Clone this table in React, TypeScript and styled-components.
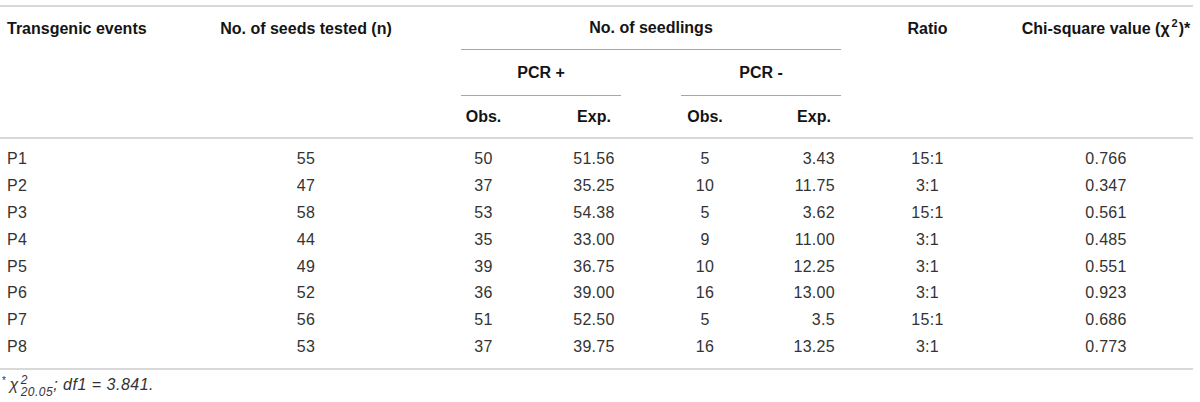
import React from "react";
import styled, { createGlobalStyle } from "styled-components";

const COLS = "212px 188px 141px 80px 140px 80px 173px 179px";

const GlobalStyle = createGlobalStyle`
  html, body { margin: 0; padding: 0; background: #ffffff; }
  body { font-family: "Liberation Sans", Arial, Helvetica, sans-serif; }
`;

const Wrapper = styled.div`
  width: 1193px;
  padding-top: 5px;
`;

const Table = styled.div`
  border-top: 2px solid #d9d9d9;
  border-bottom: 2px solid #d9d9d9;
`;

const Head = styled.div`
  display: grid;
  grid-template-columns: ${COLS};
  grid-template-rows: 43px 46px 41px;
  border-bottom: 2px solid #d9d9d9;
  font-weight: bold;
  font-size: 16px;
  color: #141414;
`;

type CellProps = {
  $col: string;
  $row?: string;
  $align?: "left" | "center" | "right";
  $pl?: number;
  $pr?: number;
};

const HeadCell = styled.div<CellProps>`
  grid-column: ${(p) => p.$col};
  grid-row: ${(p) => p.$row ?? "1"};
  display: flex;
  align-items: center;
  justify-content: ${(p) =>
    p.$align === "left" ? "flex-start" : p.$align === "right" ? "flex-end" : "center"};
  padding-left: ${(p) => p.$pl ?? 0}px;
  padding-right: ${(p) => p.$pr ?? 0}px;
  white-space: nowrap;
`;

const SpanHead = styled.div<{ $col: string; $row: string; $inset: number }>`
  grid-column: ${(p) => p.$col};
  grid-row: ${(p) => p.$row};
  margin-left: ${(p) => p.$inset}px;
  border-bottom: 1px solid #a6a6a6;
  display: flex;
  align-items: center;
  justify-content: center;
  white-space: nowrap;
`;

const Body = styled.div`
  padding: 7px 0 8px;
  font-size: 16px;
  letter-spacing: 0.3px;
  color: #333333;
`;

const Row = styled.div`
  display: grid;
  grid-template-columns: ${COLS};
  height: 26.8px;
  align-items: center;
`;

const Cell = styled.div<{ $align: "left" | "center" | "right"; $pl?: number; $pr?: number }>`
  text-align: ${(p) => p.$align};
  padding-left: ${(p) => p.$pl ?? 0}px;
  padding-right: ${(p) => p.$pr ?? 0}px;
  white-space: nowrap;
`;

const Sup = styled.span`
  display: inline-block;
  font-size: 11px;
  line-height: 11px;
  transform: translateY(-5px);
  margin: 0 1px 0 2px;
`;

const Note = styled.div`
  padding: 2px 0 0 2px;
  font-size: 16px;
  font-style: italic;
  color: #333333;
  letter-spacing: 0.5px;
  display: flex;
  align-items: center;
`;

const Star = styled.span`
  font-style: normal;
  font-size: 10px;
  line-height: 10px;
  align-self: flex-start;
  margin-top: 4px;
  margin-right: 3px;
`;

const Scripts = styled.span`
  display: inline-flex;
  flex-direction: column;
  font-size: 12px;
  line-height: 12px;
  letter-spacing: 0.5px;
  margin-left: 2px;
  margin-top: 2px;
`;

type Rec = [string, string, string, string, string, string, string, string];

const rows: Rec[] = [
  ["P1", "55", "50", "51.56", "5", "3.43", "15:1", "0.766"],
  ["P2", "47", "37", "35.25", "10", "11.75", "3:1", "0.347"],
  ["P3", "58", "53", "54.38", "5", "3.62", "15:1", "0.561"],
  ["P4", "44", "35", "33.00", "9", "11.00", "3:1", "0.485"],
  ["P5", "49", "39", "36.75", "10", "12.25", "3:1", "0.551"],
  ["P6", "52", "36", "39.00", "16", "13.00", "3:1", "0.923"],
  ["P7", "56", "51", "52.50", "5", "3.5", "15:1", "0.686"],
  ["P8", "53", "37", "39.75", "16", "13.25", "3:1", "0.773"],
];

const colSpec: { align: "left" | "center" | "right"; pl?: number; pr?: number }[] = [
  { align: "left", pl: 7 },
  { align: "center" },
  { align: "center", pl: 26 },
  { align: "center", pl: 26 },
  { align: "center", pl: 28 },
  { align: "right", pr: 6 },
  { align: "center" },
  { align: "center", pl: 5 },
];

export default function App() {
  return (
    <>
      <GlobalStyle />
      <Wrapper>
        <Table>
          <Head>
            <HeadCell $col="1" $align="left" $pl={7}>Transgenic events</HeadCell>
            <HeadCell $col="2">No. of seeds tested (n)</HeadCell>
            <SpanHead $col="3 / 7" $row="1" $inset={61}>No. of seedlings</SpanHead>
            <HeadCell $col="7">Ratio</HeadCell>
            <HeadCell $col="8" $pl={5}>
              Chi-square value (χ<Sup>2</Sup>)*
            </HeadCell>
            <SpanHead $col="3 / 5" $row="2" $inset={61}>PCR +</SpanHead>
            <SpanHead $col="5 / 7" $row="2" $inset={60}>PCR -</SpanHead>
            <HeadCell $col="3" $row="3" $pl={26}>Obs.</HeadCell>
            <HeadCell $col="4" $row="3" $pl={26}>Exp.</HeadCell>
            <HeadCell $col="5" $row="3" $pl={28}>Obs.</HeadCell>
            <HeadCell $col="6" $row="3" $pl={26}>Exp.</HeadCell>
          </Head>
          <Body>
            {rows.map((r) => (
              <Row key={r[0]}>
                {r.map((v, i) => (
                  <Cell key={i} $align={colSpec[i].align} $pl={colSpec[i].pl} $pr={colSpec[i].pr}>
                    {v}
                  </Cell>
                ))}
              </Row>
            ))}
          </Body>
        </Table>
        <Note>
          <Star>*</Star>
          <span>χ</span>
          <Scripts>
            <span>2</span>
            <span>20.05</span>
          </Scripts>
          <span>; df1 = 3.841.</span>
        </Note>
      </Wrapper>
    </>
  );
}
